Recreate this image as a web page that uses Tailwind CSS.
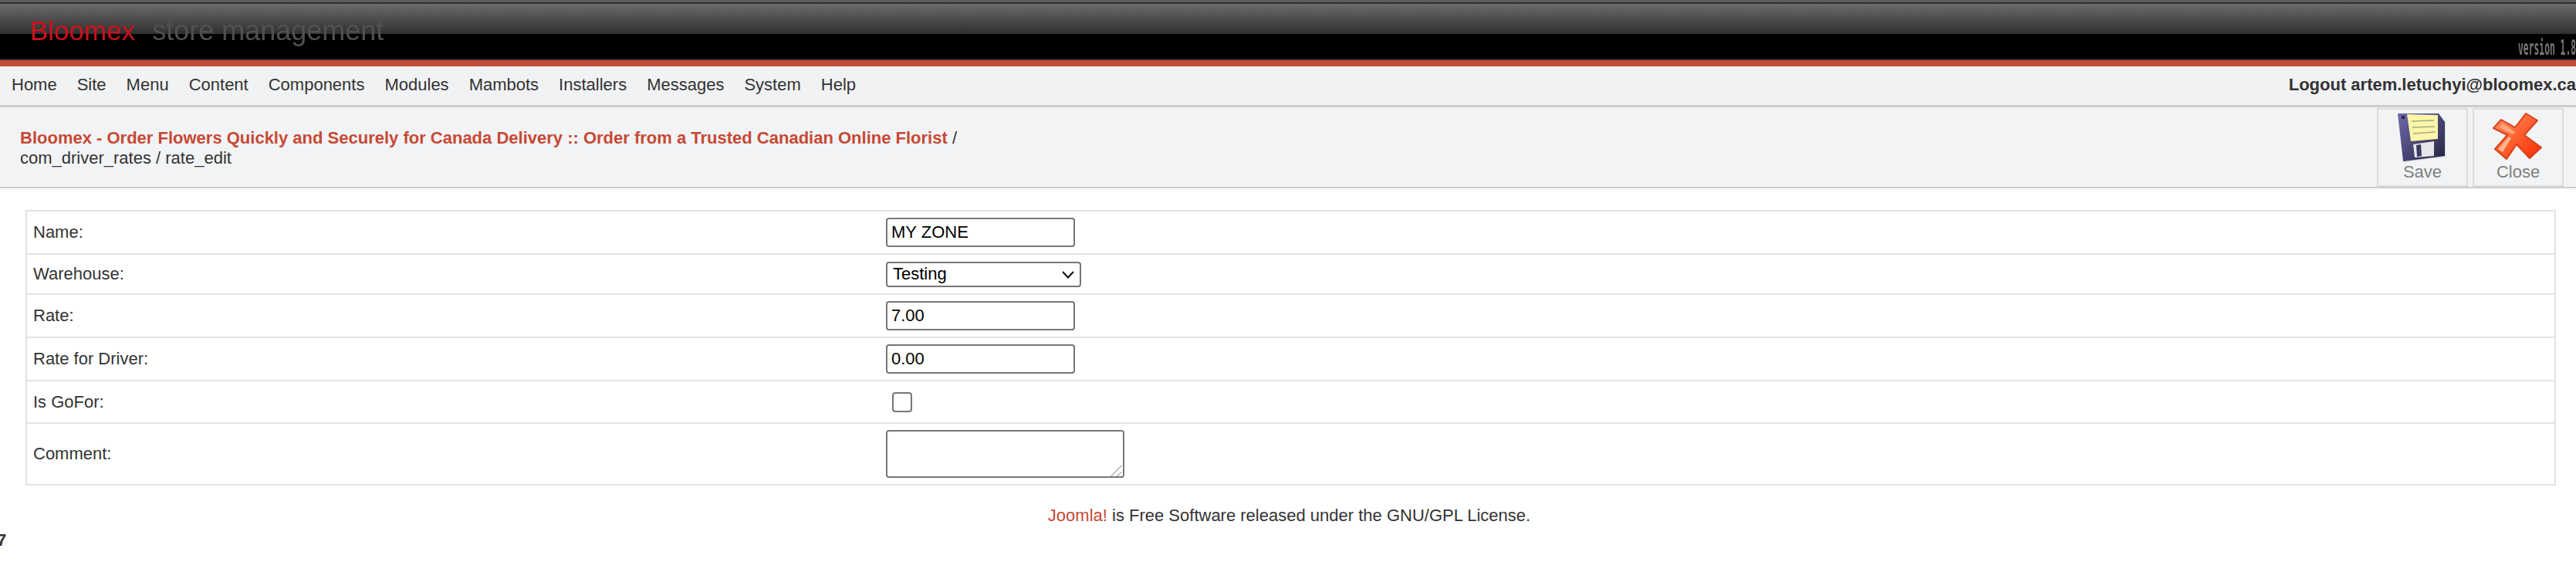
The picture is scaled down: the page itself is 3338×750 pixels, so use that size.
<!DOCTYPE html>
<html lang="en">
<head>
    <meta charset="UTF-8">
    <title>Bloomex store management</title>
    <script src="https://cdn.jsdelivr.net/npm/@tailwindcss/browser@4"></script>
</head>
<body class="bg-white text-[#333] text-[22px] leading-[26px] font-['Liberation_Sans',Arial,sans-serif] overflow-hidden">
    <!-- Header -->
    <div class="relative h-[78px] flex flex-col overflow-hidden bg-black">
        <div class="h-[3px] bg-[#5c5c5c]"></div>
        <div class="h-[2px] bg-[#333]"></div>
        <div class="h-[39px] bg-gradient-to-b from-[#6c6c6c] to-[#303030]"></div>
        <div class="flex-1 bg-black"></div>
        <div class="h-[2px] bg-[#2b2b2b]"></div>
        <div class="absolute left-[39px] top-[20px] flex gap-[22px] text-[35px] leading-[40px] whitespace-nowrap blur-[0.6px]">
            <span class="text-[#d0101c]">Bloomex</span>
            <span class="text-[#505050] text-[36px]">store management</span>
        </div>
        <div class="absolute left-[3263px] top-[46px] origin-left scale-x-[.42] whitespace-nowrap text-[#777] font-bold text-[27px] leading-[32px] font-['DejaVu_Sans_Mono',monospace] blur-[0.3px]">version 1.8</div>
    </div>
    <div class="h-[8px] bg-[#c64c3b]"></div>

    <!-- Menu -->
    <div class="h-[53px] pb-[3px] flex items-center justify-between bg-[#f1f2f4] border-b-[3px] border-[#ccc] pl-[15px]">
        <div class="flex gap-[26px]">
            <a>Home</a>
            <a>Site</a>
            <a>Menu</a>
            <a>Content</a>
            <a>Components</a>
            <a>Modules</a>
            <a>Mambots</a>
            <a>Installers</a>
            <a>Messages</a>
            <a>System</a>
            <a>Help</a>
        </div>
        <div class="font-bold whitespace-nowrap">Logout artem.letuchyi@bloomex.ca</div>
    </div>

    <!-- Toolbar -->
    <div class="h-[105px] flex justify-between bg-[#f2f3f5] border-b-2 border-[#ccc] pt-px pr-[16px]">
        <div class="pl-[26px] pt-[26px]">
            <a class="font-bold text-[#c64934]">Bloomex - Order Flowers Quickly and Securely for Canada Delivery :: Order from a Trusted Canadian Online Florist</a> /<br>
            com_driver_rates / rate_edit
        </div>
        <div class="flex gap-[6px]">
            <div class="w-[118px] flex flex-col items-center border-2 border-[#dcdcdc] pt-[4px] text-[#808080]">
                <svg class="w-[66px] h-[64px] blur-[0.5px]" viewBox="12 6 66 64">
                    <defs>
                        <linearGradient id="disk" x1="0" y1="0" x2="1" y2="1">
                            <stop offset="0" stop-color="#6f6bb0"/>
                            <stop offset="1" stop-color="#26243f"/>
                        </linearGradient>
                    </defs>
                    <polygon points="13,7 66,7 75,18 75,63 21,70" fill="#d5d6dc"/>
                    <polygon points="13,7 66,7 74,18 74,62 20,69" fill="url(#disk)"/>
                    <rect x="18" y="10" width="4" height="4" fill="#2c2a4a"/>
                    <polygon points="25,8 65,9 65,40 30,43" fill="#fbf6a8"/>
                    <path d="M31 17 L60 16 M32 25 L61 24 M33 33 L62 31" stroke="#a9a888" stroke-width="1.5" fill="none"/>
                    <polygon points="33,47 60,43 60,62 35,64" fill="#e6e6ea"/>
                    <polygon points="37,48 43,47 44,62 38,63" fill="#3c3a62"/>
                </svg>
                <span>Save</span>
            </div>
            <div class="w-[118px] flex flex-col items-center border-2 border-[#dcdcdc] pt-[4px] text-[#808080]">
                <svg class="w-[66px] h-[64px] blur-[0.5px]" viewBox="7 5 66 64">
                    <defs>
                        <linearGradient id="cross" x1="0" y1="0" x2="1" y2="1">
                            <stop offset="0" stop-color="#ff9a6a"/>
                            <stop offset="0.55" stop-color="#ff5a2a"/>
                            <stop offset="1" stop-color="#f52a05"/>
                        </linearGradient>
                    </defs>
                    <polygon points="18,14 36,24 50,6 65,15 48,34 70,50 55,64 38,46 25,65 10,52 26,34 8,25" fill="url(#cross)" stroke="#d8421c" stroke-width="2" stroke-linejoin="round"/>
                    <polygon points="14,52 28,36 31,38 20,56" fill="#ffb48c"/>
                    <polygon points="16,24 20,19 36,30 33,33" fill="#ffa77c"/>
                </svg>
                <span>Close</span>
            </div>
        </div>
    </div>

    <!-- Form -->
    <table class="mt-[28px] ml-[33px] w-[3279px] table-fixed border-separate border-spacing-0 border-2 border-[#e2e2e2]">
        <tbody>
            <tr class="h-[54px]">
                <td class="w-[1113px] pl-[8px]">Name:</td>
                <td><input class="block w-[245px] h-[38px] px-[5px] border-2 border-[#767676] rounded-[4px] text-black" type="text" value="MY ZONE"></td>
            </tr>
            <tr class="h-[52px]">
                <td class="pl-[8px] border-t-2 border-[#e2e2e2]">Warehouse:</td>
                <td class="border-t-2 border-[#e2e2e2]">
                    <div class="relative w-[253px]">
                        <select class="block appearance-none w-full h-[33px] pl-[7px] border-2 border-[#767676] rounded-[4px] bg-white text-black">
                            <option>Testing</option>
                        </select>
                        <svg class="absolute right-[9px] top-[12px] w-[16px] h-[10px]" viewBox="0 0 16 10"><path d="M1 1 L8 8.5 L15 1" fill="none" stroke="#111" stroke-width="2"/></svg>
                    </div>
                </td>
            </tr>
            <tr class="h-[56px]">
                <td class="pl-[8px] border-t-2 border-[#e2e2e2]">Rate:</td>
                <td class="border-t-2 border-[#e2e2e2]"><input class="block w-[245px] h-[38px] px-[5px] border-2 border-[#767676] rounded-[4px] text-black" type="text" value="7.00"></td>
            </tr>
            <tr class="h-[56px]">
                <td class="pl-[8px] border-t-2 border-[#e2e2e2]">Rate for Driver:</td>
                <td class="border-t-2 border-[#e2e2e2]"><input class="block w-[245px] h-[38px] px-[5px] border-2 border-[#767676] rounded-[4px] text-black" type="text" value="0.00"></td>
            </tr>
            <tr class="h-[55px]">
                <td class="pl-[8px] border-t-2 border-[#e2e2e2]">Is GoFor:</td>
                <td class="border-t-2 border-[#e2e2e2]"><input class="block ml-[8px] appearance-none w-[26px] h-[26px] border-2 border-[#767676] rounded-[4px] bg-white" type="checkbox"></td>
            </tr>
            <tr class="h-[80px]">
                <td class="pl-[8px] border-t-2 border-[#e2e2e2]">Comment:</td>
                <td class="border-t-2 border-[#e2e2e2]">
                    <div class="relative w-[309px]">
                        <textarea class="block w-full h-[62px] resize-none border-2 border-[#767676] rounded-[4px]"></textarea>
                        <svg class="absolute left-[290px] top-[45px] w-[16px] h-[16px]" viewBox="0 0 16 16"><path d="M1 15.5 L15.5 1 M9 15.5 L15.5 9" fill="none" stroke="#666" stroke-width="1"/></svg>
                    </div>
                </td>
            </tr>
        </tbody>
    </table>

    <!-- Footer -->
    <div class="mt-[26px] pl-[3px] text-center"><a class="text-[#c64934]">Joomla!</a> is Free Software released under the GNU/GPL License.</div>
    <div class="mt-[6px] -ml-[4px] font-bold">7</div>
</body>
</html>
